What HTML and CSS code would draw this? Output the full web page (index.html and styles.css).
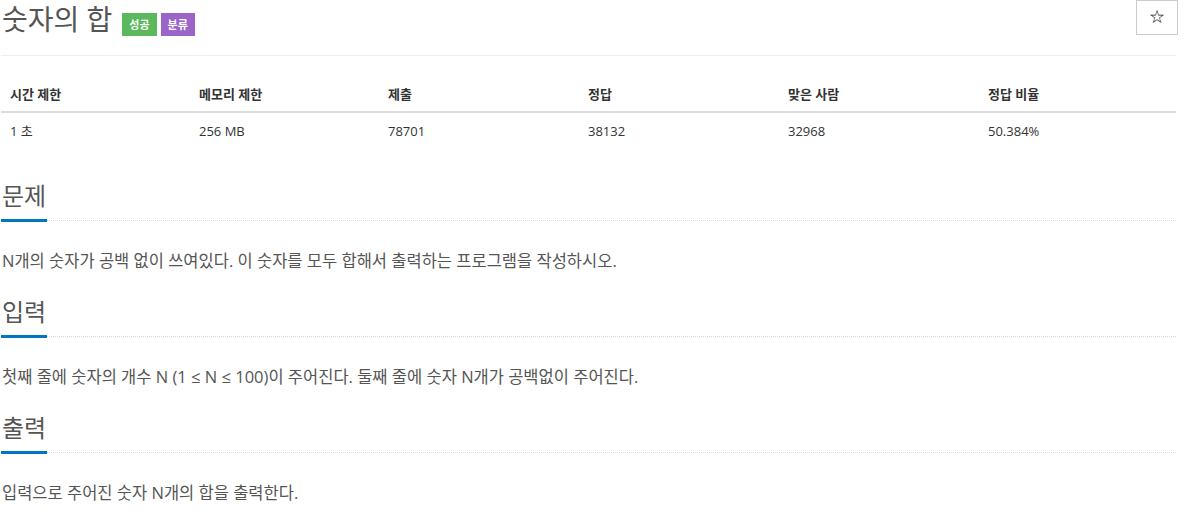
FILE: index.html
```html
<html lang="ko">

<head>
    <meta charset="UTF-8">
    <meta name="viewport" content="width=device-width, initial-scale=1.0">
    <title>숫자의 합</title>
    <link rel="stylesheet" href="styles.css">
</head>

<body>
    <div class="page">
        <div class="page-header">
            <h1 class="title">숫자의 합</h1>
            <span class="label label-success">성공</span>
            <span class="label label-tag">분류</span>
            <button class="star-btn">&#9734;</button>
        </div>

        <table class="info-table">
            <thead>
                <tr>
                    <th class="col-1">시간 제한</th>
                    <th class="col-2">메모리 제한</th>
                    <th class="col-3">제출</th>
                    <th class="col-4">정답</th>
                    <th class="col-5">맞은 사람</th>
                    <th>정답 비율</th>
                </tr>
            </thead>
            <tbody>
                <tr>
                    <td>1 초</td>
                    <td>256 MB</td>
                    <td>78701</td>
                    <td>38132</td>
                    <td>32968</td>
                    <td>50.384%</td>
                </tr>
            </tbody>
        </table>

        <section class="problem-section">
            <div class="headline">
                <h2>문제</h2>
            </div>
            <p>N개의 숫자가 공백 없이 쓰여있다. 이 숫자를 모두 합해서 출력하는 프로그램을 작성하시오.</p>
        </section>

        <section class="problem-section">
            <div class="headline">
                <h2>입력</h2>
            </div>
            <p>첫째 줄에 숫자의 개수 N (1 ≤ N ≤ 100)이 주어진다. 둘째 줄에 숫자 N개가 공백없이 주어진다.</p>
        </section>

        <section class="problem-section">
            <div class="headline">
                <h2>출력</h2>
            </div>
            <p>입력으로 주어진 숫자 N개의 합을 출력한다.</p>
        </section>
    </div>
</body>

</html>
```

FILE: styles.css
```css
body {
    font-family: "Open Sans", "Noto Sans CJK KR", sans-serif;
    margin: 0;
    color: #555;
    background-color: #fff;
}

.page {
    margin-left: 1px;
    width: 1175px;
}

.page-header {
    display: flex;
    align-items: flex-start;
    height: 55px;
    border-bottom: 1px solid #eee;
    margin-bottom: 15px;
}

.title {
    font-size: 28px;
    font-weight: 400;
    margin: 0 10px 0 1px;
    line-height: 38px;
    color: #555;
    white-space: nowrap;
}

.label {
    display: inline-block;
    margin-top: 13px;
    padding: 0 7px;
    height: 23px;
    line-height: 23px;
    font-size: 11px;
    font-weight: 700;
    color: #fff;
    margin-right: 4px;
}

.label-success {
    background-color: #5cb85c;
}

.label-tag {
    background-color: #9b64c8;
}

.star-btn {
    margin-left: auto;
    margin-right: -2px;
    width: 42px;
    height: 35px;
    background: #fff;
    border: 1px solid #ccc;
    font-size: 16px;
    color: #222;
    padding: 0;
    cursor: pointer;
}

.info-table {
    width: 1175px;
    border-collapse: collapse;
    font-size: 13px;
    color: #333;
    margin-bottom: 33px;
}

.info-table th {
    text-align: left;
    font-weight: 700;
    padding: 8px 8px 8px 9px;
    height: 41px;
    box-sizing: border-box;
    border-bottom: 2px solid #ddd;
    vertical-align: bottom;
}

.info-table td {
    padding: 9px 8px 9px 9px;
    line-height: 18px;
}

.col-1,
.col-2 {
    width: 189px;
}

.col-3,
.col-4,
.col-5 {
    width: 200px;
}

.headline {
    border-bottom: 1px dotted #cfd8ea;
    margin-bottom: 30px;
}

.headline h2 {
    display: inline-block;
    font-size: 24px;
    font-weight: 400;
    margin: 0 0 -2px 0;
    padding: 0 1px 9px 1px;
    line-height: 28px;
    color: #555;
    border-bottom: 3px solid #0076c0;
}

.problem-section p {
    font-size: 16.5px;
    line-height: 20px;
    margin: 0 0 27px 1px;
    color: #555;
}
```
